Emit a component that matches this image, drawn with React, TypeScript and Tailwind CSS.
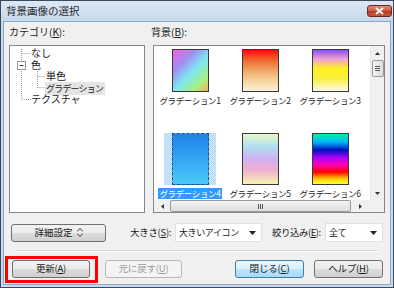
import React from 'react';

const font = { fontFamily: '"Noto Sans CJK JP", "Noto Sans", sans-serif' };

const thumbs = [
  { name: 'グラデーション1', bg: 'bg-[linear-gradient(135deg,#f060e0_0%,#a090f0_30%,#80e8f0_55%,#a8f080_80%,#f0b060_100%)]' },
  { name: 'グラデーション2', bg: 'bg-[linear-gradient(#ff0a0a_0%,#f06a30_25%,#f0b070_55%,#f8dca8_80%,#faf0d8_100%)]' },
  { name: 'グラデーション3', bg: 'bg-[linear-gradient(#8a4cf0_0%,#f0a0d8_22%,#fff020_45%,#f8f040_70%,#fff8e8_100%)]' },
  { name: 'グラデーション4', bg: 'bg-[linear-gradient(#1078e8_0%,#2aa8f4_60%,#40c8fa_100%)]' },
  { name: 'グラデーション5', bg: 'bg-[linear-gradient(#e8f8c8_0%,#b0e0f0_25%,#d0b0f0_50%,#f0b0d0_72%,#f8f4b0_100%)]' },
  { name: 'グラデーション6', bg: 'bg-[linear-gradient(#00f0a0_0%,#00b8f8_16%,#0010c0_32%,#b000f8_48%,#ff00b0_62%,#ff0000_76%,#ffd000_90%,#ffff40_100%)]' },
];

function Btn({ children, w, variant = 'normal' }: { children: React.ReactNode; w: string; variant?: 'normal' | 'default' | 'disabled' }) {
  const cls =
    variant === 'default'
      ? 'border-[#3c7fb1] bg-[linear-gradient(#eaf6fd_0%,#d9f0fc_50%,#bee6fd_51%,#a7d9f5_100%)] text-[#1a1a1a]'
      : variant === 'disabled'
      ? 'border-[#b4b8bb] bg-[#f4f4f4] text-[#9a9a9a]'
      : 'border-[#707070] bg-[linear-gradient(#f2f2f2_0%,#ebebeb_50%,#dddddd_51%,#cfcfcf_100%)] text-[#1a1a1a]';
  return (
    <div className={`${w} h-[18px] rounded-[3px] border flex items-center justify-center text-[9.5px] tracking-[-0.2px] leading-none whitespace-nowrap ${cls}`}>
      {children}
    </div>
  );
}

function Combo({ w, text }: { w: string; text: string }) {
  return (
    <div className={`${w} h-[19px] bg-white border border-[#e2e2e2] flex items-center justify-between pl-[3px] pr-[5px] text-[9px] tracking-[-0.4px] whitespace-nowrap text-[#1a1a1a]`}>
      <span>{text}</span>
      <svg width="7" height="4" viewBox="0 0 7 4"><path d="M0 0h7L3.5 4z" fill="#222" /></svg>
    </div>
  );
}

export default function App() {
  return (
    <div className="w-[394px] h-[288px] overflow-hidden bg-[#c9daee] border border-[#3a4a5e] flex flex-col" style={font}>
      {/* title bar */}
      <div className="h-[20px] shrink-0 flex items-center justify-between pl-[5px] pr-[1px] bg-[linear-gradient(#dde8f4,#c6d8ec)]">
        <span className="text-[10.5px] text-[#2a2a2a] leading-none">背景画像の選択</span>
        <div className="w-[25px] h-[12px] rounded-[3px] border border-[#6b2a20] bg-[linear-gradient(#e08a78_0%,#cf5a44_50%,#b83a26_51%,#c8543c_100%)] flex items-center justify-center">
          <svg width="9" height="8" viewBox="0 0 9 8"><path d="M1 1l7 6M8 1L1 7" stroke="#fff" strokeWidth="2" /></svg>
        </div>
      </div>

      {/* body */}
      <div className="flex-1 mx-[2px] mb-[2px] border border-[#8ea6c2] bg-[#f0f0f0] flex flex-col px-[5px] text-[#1a1a1a]">
        <div className="h-[23px] shrink-0 flex text-[10px] leading-[12px] pt-[4px]">
          <span className="w-[142px]">カテゴリ(<u>K</u>):</span>
          <span>背景(<u>B</u>):</span>
        </div>

        <div className="h-[168px] shrink-0 flex gap-[8px]">
          {/* tree */}
          <div className="relative w-[136px] border border-[#828790] bg-white text-[10px] leading-[11.5px] pt-[1px]">
            <svg className="absolute left-0 top-0" width="60" height="60" viewBox="0 0 60 60">
              <g stroke="#a0a0a0" strokeDasharray="1 1" strokeWidth="1">
                <path d="M11.5 3v50.5M11.5 7.5h9M12 53.5h9M27.5 23v19M27.5 30.5h8M27.5 41.5h8" />
              </g>
              <rect x="7.5" y="15.5" width="8" height="8" fill="#fff" stroke="#9a9a9a" />
              <path d="M9.5 19.5h4" stroke="#333" />
            </svg>
            <div className="h-[11.5px] pl-[21px]">なし</div>
            <div className="h-[11.5px] pl-[21px]">色</div>
            <div className="h-[11.5px] pl-[36px]">単色</div>
            <div className="h-[11.5px] pl-[35px]">
              <span className="bg-[#e4e4e4] pl-[1px] pr-[2px] text-[9px] tracking-[-0.8px]">グラデーション</span>
            </div>
            <div className="h-[11.5px] pl-[21px]">テクスチャ</div>
          </div>

          {/* list */}
          <div className="w-[232px] border border-[#828790] bg-white flex flex-col">
            <div className="flex-1 flex">
              <div className="flex-1 grid grid-cols-[70px_70px_70px] pl-[1px] pt-[3px]">
                {thumbs.map((t, i) => {
                  const row2 = i >= 3;
                  const sel = i === 3;
                  return (
                    <div key={t.name} className={`flex flex-col items-center ${row2 ? 'h-[68px]' : 'h-[83px]'}`}>
                      <div
                        className={`flex justify-center w-[52px] ${row2 ? 'h-[52px] mt-[1px]' : 'h-[43px]'} ${
                          sel ? 'bg-[repeating-conic-gradient(#a8d4f6_0_25%,#dceefc_0_50%)] bg-[length:2px_2px]' : ''
                        }`}
                      >
                        <div
                          className={`w-[37px] h-full ${t.bg} ${
                            sel ? 'border border-dashed border-[#204070] opacity-90' : 'border border-[#3a3a3a]'
                          }`}
                        />
                      </div>
                      <div
                        className={`mt-[3px] h-[11px] px-[1px] text-[8.5px] leading-[11px] tracking-[-0.35px] whitespace-nowrap ${
                          sel ? 'bg-[#3399ff] text-white' : 'text-[#1a1a1a]'
                        }`}
                      >
                        {t.name}
                      </div>
                    </div>
                  );
                })}
              </div>
              {/* vertical scrollbar */}
              <div className="w-[14px] bg-[#f0f0f0] border-l border-[#e6e6e6] flex flex-col items-center">
                <div className="h-[14px] flex items-center justify-center">
                  <svg width="5" height="3" viewBox="0 0 5 3"><path d="M0 3h5L2.5 0z" fill="#333" /></svg>
                </div>
                <div className="w-[12px] h-[17px] rounded-[2px] border border-[#9a9a9a] bg-[linear-gradient(90deg,#f4f4f4,#dcdcdc)] flex flex-col items-center justify-center gap-[1px]">
                  <div className="w-[5px] h-px bg-[#555]" />
                  <div className="w-[5px] h-px bg-[#555]" />
                  <div className="w-[5px] h-px bg-[#555]" />
                </div>
                <div className="flex-1" />
                <div className="h-[14px] flex items-center justify-center">
                  <svg width="5" height="3" viewBox="0 0 5 3"><path d="M0 0h5L2.5 3z" fill="#333" /></svg>
                </div>
              </div>
            </div>
            {/* horizontal scrollbar */}
            <div className="h-[15px] flex bg-[#f0f0f0]">
              <div className="flex-1 flex items-center">
                <div className="w-[16px] flex justify-center">
                  <svg width="3" height="5" viewBox="0 0 3 5"><path d="M3 0v5L0 2.5z" fill="#333" /></svg>
                </div>
                <div className="w-[181px] h-[12px] rounded-[2px] border border-[#9a9a9a] bg-[linear-gradient(#f4f4f4,#dcdcdc)] flex items-center justify-center gap-[1px]">
                  <div className="w-px h-[5px] bg-[#555]" />
                  <div className="w-px h-[5px] bg-[#555]" />
                  <div className="w-px h-[5px] bg-[#555]" />
                </div>
                <div className="flex-1 flex justify-center">
                  <svg width="3" height="5" viewBox="0 0 3 5"><path d="M0 0v5L3 2.5z" fill="#333" /></svg>
                </div>
              </div>
              <div className="w-[14px] bg-[#f0f0f0]" />
            </div>
          </div>
        </div>

        {/* options row */}
        <div className="mt-[10px] h-[19px] shrink-0 flex items-center text-[9.5px] whitespace-nowrap">
          <div className="ml-[2px] w-[95px] h-[18px] rounded-[3px] border border-[#707070] bg-[linear-gradient(#f2f2f2_0%,#ebebeb_50%,#dddddd_51%,#cfcfcf_100%)] flex items-center justify-center gap-[4px]">
            <span>詳細設定</span>
            <svg width="6" height="9" viewBox="0 0 6 9"><path d="M0 3.5L3 0.5 6 3.5M0 5.5L3 8.5 6 5.5" fill="none" stroke="#333" /></svg>
          </div>
          <span className="ml-[24px] w-[45px] tracking-[-0.3px]">大きさ(<u>S</u>):</span>
          <Combo w="w-[87px]" text="大きいアイコン" />
          <span className="ml-[10px] w-[53px] tracking-[-0.5px]">絞り込み(<u>E</u>):</span>
          <Combo w="w-[58px]" text="全て" />
        </div>

        {/* separator */}
        <div className="mt-[8px] mx-[7px] h-[2px] shrink-0 border-t border-[#d5d5d5] border-b border-b-white" />

        {/* buttons */}
        <div className="mt-[8px] h-[18px] shrink-0 flex items-center">
          <div className="relative ml-[3px]">
            <Btn w="w-[78px]">更新(<u>A</u>)</Btn>
            <div className="absolute -left-[7px] -top-[4px] -right-[8px] -bottom-[5px] border-[3px] border-[#ff0000]" />
          </div>
          <div className="ml-[15px]">
            <Btn w="w-[77px]" variant="disabled">元に戻す(<u>U</u>)</Btn>
          </div>
          <div className="ml-[53px]">
            <Btn w="w-[69px]" variant="default">閉じる(<u>C</u>)</Btn>
          </div>
          <div className="ml-[10px]">
            <Btn w="w-[69px]">ヘルプ(<u>H</u>)</Btn>
          </div>
        </div>
      </div>
    </div>
  );
}
